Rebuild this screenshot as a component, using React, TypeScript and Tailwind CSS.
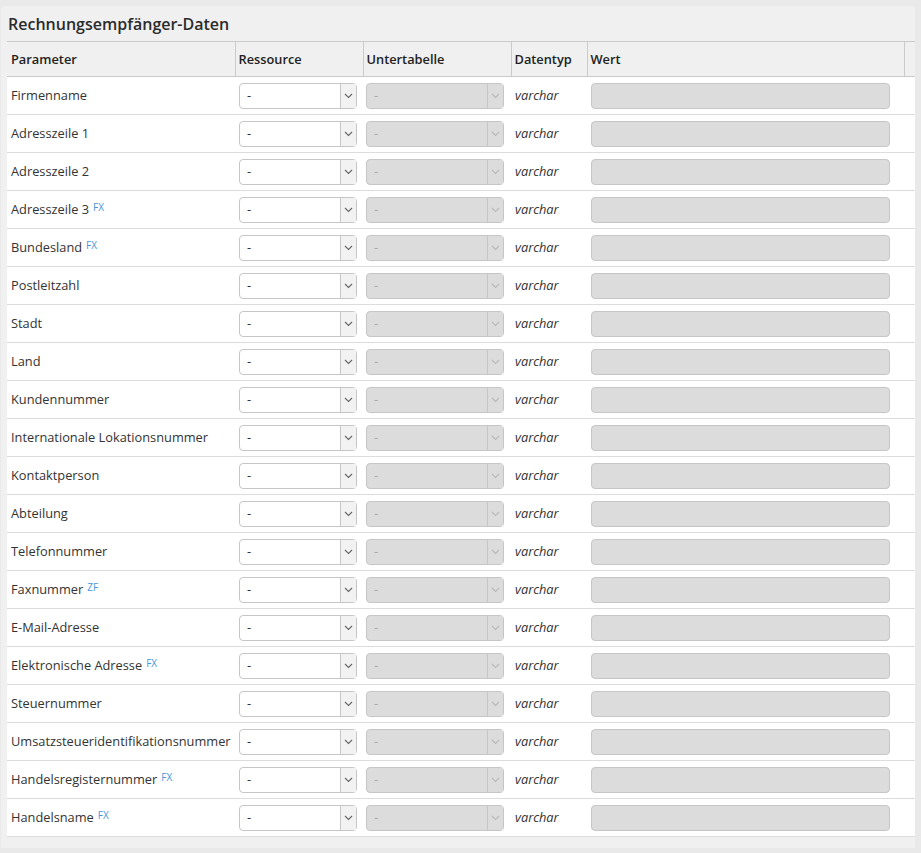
import React from 'react';

type Row = { label: string; tag?: string };

const rows: Row[] = [
  { label: 'Firmenname' },
  { label: 'Adresszeile 1' },
  { label: 'Adresszeile 2' },
  { label: 'Adresszeile 3', tag: 'FX' },
  { label: 'Bundesland', tag: 'FX' },
  { label: 'Postleitzahl' },
  { label: 'Stadt' },
  { label: 'Land' },
  { label: 'Kundennummer' },
  { label: 'Internationale Lokationsnummer' },
  { label: 'Kontaktperson' },
  { label: 'Abteilung' },
  { label: 'Telefonnummer' },
  { label: 'Faxnummer', tag: 'ZF' },
  { label: 'E-Mail-Adresse' },
  { label: 'Elektronische Adresse', tag: 'FX' },
  { label: 'Steuernummer' },
  { label: 'Umsatzsteueridentifikationsnummer' },
  { label: 'Handelsregisternummer', tag: 'FX' },
  { label: 'Handelsname', tag: 'FX' },
];

const Chevron: React.FC<{ light?: boolean }> = ({ light }) => (
  <svg width="9" height="6" viewBox="0 0 9 6" fill="none">
    <path d="M1 1l3.5 3.5L8 1" stroke={light ? '#b8b8b8' : '#666'} strokeWidth="1.1" />
  </svg>
);

const SelectBox: React.FC<{ disabled?: boolean; width: string }> = ({ disabled, width }) => (
  <div
    className={`flex h-[26px] items-stretch rounded-[4px] border border-[#c6c6c6] ${width} ${
      disabled ? 'bg-[#dcdcdc] text-[#a8a8a8]' : 'bg-white text-[#333]'
    }`}
  >
    <span className="flex flex-1 items-center pl-[7px] text-[13px]">-</span>
    <span
      className={`flex w-[16px] items-center justify-center border-l border-[#c6c6c6] ${
        disabled ? 'bg-[#dcdcdc]' : 'bg-[#f2f2f2]'
      }`}
    >
      <Chevron light={disabled} />
    </span>
  </div>
);

export default function App() {
  return (
    <div
      className="min-h-[853px] bg-[#e9e9e9] pt-[6px] pb-[5px] text-[#333]"
      style={{ fontFamily: '"Open Sans", "Liberation Sans", sans-serif' }}
    >
      <div className="ml-px w-[914px] rounded-t-[4px] bg-[#f0f0f0] pb-[11px] pl-[6px]">
        <h2 className="flex h-[35px] items-center pl-px pt-[1px] text-[16px] font-semibold text-[#2b2b2b]">
          Rechnungsempfänger-Daten
        </h2>
        <table className="w-[908px] table-fixed border-collapse text-[12.8px]">
          <colgroup>
            <col className="w-[228px]" />
            <col className="w-[128px]" />
            <col className="w-[148px]" />
            <col className="w-[76px]" />
            <col className="w-[317px]" />
            <col className="w-[11px]" />
          </colgroup>
          <thead>
            <tr className="h-[35px] border-y border-[#cacaca] bg-[#f0f0f0] text-left">
              {['Parameter', 'Ressource', 'Untertabelle', 'Datentyp', 'Wert', ''].map((h, i) => (
                <th
                  key={i}
                  className={`pt-[2px] font-semibold text-[#222] ${i === 0 ? 'px-[4px]' : 'px-[3px]'} ${
                    i < 5 ? 'border-r border-[#cacaca]' : ''
                  }`}
                >
                  {h}
                </th>
              ))}
            </tr>
          </thead>
          <tbody>
            {rows.map((r) => (
              <tr key={r.label} className="h-[38px] border-b border-[#dcdcdc] bg-white">
                <td className="px-[4px] whitespace-nowrap">
                  {r.label}
                  {r.tag && (
                    <sup className="relative top-[-3px] ml-[4px] text-[10px] text-[#4a94dc]">{r.tag}</sup>
                  )}
                </td>
                <td className="pl-[4px]">
                  <SelectBox width="w-[118px]" />
                </td>
                <td className="pl-[3px]">
                  <SelectBox disabled width="w-[138px]" />
                </td>
                <td className="px-[4px] italic">varchar</td>
                <td className="pl-[4px]">
                  <div className="h-[26px] w-[299px] rounded-[4px] border border-[#c6c6c6] bg-[#dcdcdc]" />
                </td>
                <td />
              </tr>
            ))}
          </tbody>
        </table>
      </div>
    </div>
  );
}
